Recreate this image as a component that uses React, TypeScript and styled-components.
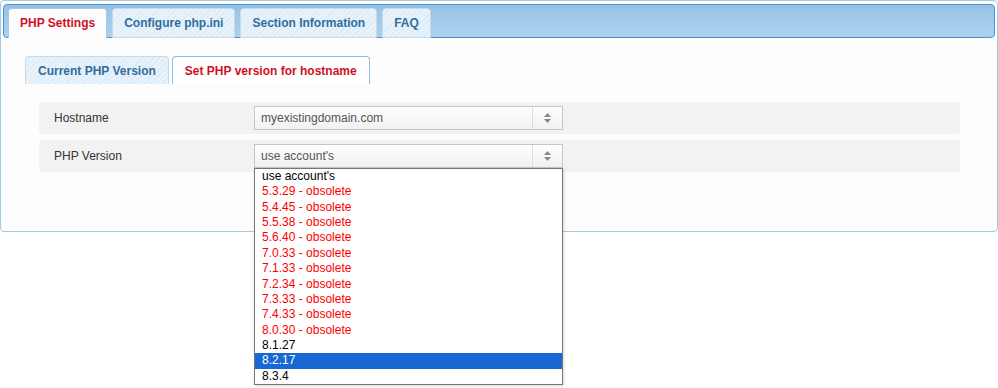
import React from "react";
import styled, { createGlobalStyle } from "styled-components";

const GlobalStyle = createGlobalStyle`
    html, body {
        margin: 0;
        background: #ffffff;
        font-family: "Liberation Sans", Arial, sans-serif;
        font-size: 12px;
    }
    #root {
        min-height: 100vh;
    }
`

const Panel = styled.div`
    box-sizing: border-box;
    width: 998px;
    border: 1px solid #a6c9e2;
    border-radius: 4px;
    padding: 3px 2px 26px 2px;
    background: #fdfdfd;
`

const TabBar = styled.ul`
    display: flex;
    gap: 5px;
    list-style: none;
    margin: 0;
    height: 29px;
    box-sizing: content-box;
    padding: 3px 4px 0 4px;
    border: 1px solid #4c92d0;
    border-radius: 4px;
    background: linear-gradient(to bottom, #97c2e5, #add2ec);
`

const stripes = `
    background-color: #e4f0fa;
    background-image: repeating-linear-gradient(
        -45deg,
        #dbeaf7 0px,
        #dbeaf7 1px,
        #e8f2fb 1px,
        #e8f2fb 4px
    );
`

const Tab = styled.li<{ active?: boolean }>`
    box-sizing: border-box;
    height: 30px;
    margin-bottom: -1px;
    padding: 0 11px 1px 11px;
    display: flex;
    align-items: center;
    align-self: flex-start;
    font-weight: bold;
    font-size: 12px;
    border: 1px solid ${(p) => (p.active ? "#a6c9e2" : "#c5dbec")};
    border-bottom: ${(p) => (p.active ? "none" : "1px solid #c5dbec")};
    border-radius: 4px 4px 0 0;
    color: ${(p) => (p.active ? "#d0101f" : "#2e6e9e")};
    ${(p) => (p.active ? "background: #fdfdfd; position: relative;" : stripes)}
`

const Content = styled.div`
    padding: 18px 35px 0 22px;
`

const SubTabs = styled.div`
    display: flex;
    gap: 3px;
    margin-bottom: 18px;
`

const SubTab = styled.div<{ active?: boolean }>`
    box-sizing: border-box;
    height: 28px;
    padding: 0 12px;
    display: flex;
    align-items: center;
    font-weight: bold;
    font-size: 12px;
    border: 1px solid ${(p) => (p.active ? "#8fbde0" : "#c5dbec")};
    border-bottom: none;
    border-radius: 4px 4px 0 0;
    color: ${(p) => (p.active ? "#d0101f" : "#2e6e9e")};
    ${(p) => (p.active ? "background: #ffffff;" : stripes)}
`

const Form = styled.div`
    display: flex;
    flex-direction: column;
    gap: 6px;
    margin-left: 14px;
`

const Row = styled.div`
    display: grid;
    grid-template-columns: 200px 309px;
    align-items: center;
    height: 32px;
    padding: 0 15px;
    background: #f2f2f2;
    border-radius: 4px;
    color: #333333;
`

const Field = styled.div`
    position: relative;
`

const Select = styled.div`
    box-sizing: border-box;
    height: 24px;
    display: flex;
    align-items: center;
    border: 1px solid #c6c6c6;
    background: linear-gradient(to bottom, #ffffff, #f1f1f1);
    color: #555555;
`

const SelectValue = styled.span`
    flex: 1;
    padding-left: 6px;
`

const Arrows = styled.span`
    width: 29px;
    height: 100%;
    border-left: 1px solid #dddddd;
    display: flex;
    align-items: center;
    justify-content: center;
`

const ListBox = styled.ul`
    position: absolute;
    z-index: 10;
    top: 24px;
    left: 0;
    box-sizing: border-box;
    width: 309px;
    margin: 0;
    padding: 0;
    list-style: none;
    background: #ffffff;
    border: 1px solid #767676;
    box-shadow: 1px 1px 3px rgba(0, 0, 0, 0.15);
`

const Option = styled.li<{ obsolete?: boolean; selected?: boolean }>`
    height: 15.36px;
    line-height: 15px;
    padding-left: 7px;
    color: ${(p) => (p.selected ? "#ffffff" : p.obsolete ? "#ff0000" : "#000000")};
    background: ${(p) => (p.selected ? "#1967d2" : "transparent")};
`

const ButtonRow = styled.div`
    display: flex;
    justify-content: flex-end;
    width: 524px;
    margin-top: 9px;
`

const SaveButton = styled.button`
    height: 18px;
    padding: 0 14px;
    border: 1px solid #c5dbec;
    border-radius: 3px;
    background: #dfeffc;
    color: #2e6e9e;
    font-family: inherit;
    font-size: 12px;
    font-weight: bold;
`

const ArrowIcon = () => (
    <svg width="9" height="12" viewBox="0 0 9 12">
        <path d="M4.5 1 L8 5 L1 5 Z" fill="#888888" />
        <path d="M1 7 L8 7 L4.5 11 Z" fill="#888888" />
    </svg>
)

const versions: { label: string; obsolete?: boolean }[] = [
    { label: "use account's" },
    { label: "5.3.29 - obsolete", obsolete: true },
    { label: "5.4.45 - obsolete", obsolete: true },
    { label: "5.5.38 - obsolete", obsolete: true },
    { label: "5.6.40 - obsolete", obsolete: true },
    { label: "7.0.33 - obsolete", obsolete: true },
    { label: "7.1.33 - obsolete", obsolete: true },
    { label: "7.2.34 - obsolete", obsolete: true },
    { label: "7.3.33 - obsolete", obsolete: true },
    { label: "7.4.33 - obsolete", obsolete: true },
    { label: "8.0.30 - obsolete", obsolete: true },
    { label: "8.1.27" },
    { label: "8.2.17" },
    { label: "8.3.4" },
]

export default function App() {
    return (
        <>
            <GlobalStyle />
            <Panel>
                <TabBar>
                    <Tab active>PHP Settings</Tab>
                    <Tab>Configure php.ini</Tab>
                    <Tab>Section Information</Tab>
                    <Tab>FAQ</Tab>
                </TabBar>
                <Content>
                    <SubTabs>
                        <SubTab>Current PHP Version</SubTab>
                        <SubTab active>Set PHP version for hostname</SubTab>
                    </SubTabs>
                    <Form>
                        <Row>
                            <span>Hostname</span>
                            <Field>
                                <Select>
                                    <SelectValue>myexistingdomain.com</SelectValue>
                                    <Arrows><ArrowIcon /></Arrows>
                                </Select>
                            </Field>
                        </Row>
                        <Row>
                            <span>PHP Version</span>
                            <Field>
                                <Select>
                                    <SelectValue>use account's</SelectValue>
                                    <Arrows><ArrowIcon /></Arrows>
                                </Select>
                                <ListBox>
                                    {versions.map((v) => (
                                        <Option
                                            key={v.label}
                                            obsolete={v.obsolete}
                                            selected={v.label === "8.2.17"}
                                        >
                                            {v.label}
                                        </Option>
                                    ))}
                                </ListBox>
                            </Field>
                        </Row>
                        <ButtonRow>
                            <SaveButton>Save</SaveButton>
                        </ButtonRow>
                    </Form>
                </Content>
            </Panel>
        </>
    )
}
